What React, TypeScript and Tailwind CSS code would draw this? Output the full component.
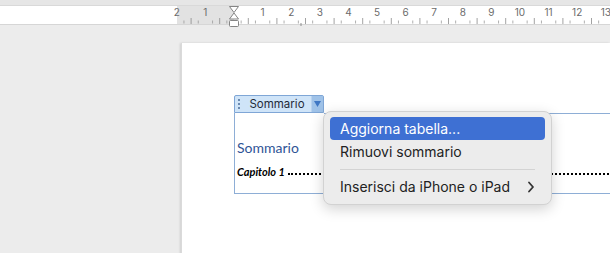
import React from "react";

function Ruler() {
  const zero = 234;
  const cm = 28.6;
  const ticks: React.ReactNode[] = [];
  const nums: React.ReactNode[] = [];
  for (let q = -8; q <= 60; q++) {
    const x = zero + (q * cm) / 4;
    if (x < 176 || x > 612) continue;
    if (q % 4 === 0) {
      const n = Math.abs(q / 4);
      if (n !== 0)
        nums.push(
          <text key={"n" + q} x={x} y={9.5} textAnchor="middle" fontSize="10" fill="#6b6b6b" fontFamily="Inter, sans-serif">
            {n}
          </text>
        );
    } else if (q % 2 === 0) {
      ticks.push(<line key={"t" + q} x1={x} x2={x} y1={12} y2={18} stroke="#8a8a8a" strokeWidth="0.8" />);
    } else {
      ticks.push(<line key={"t" + q} x1={x} x2={x} y1={14.5} y2={17.5} stroke="#9a9a9a" strokeWidth="0.8" />);
    }
  }
  return (
    <svg width="610" height="18" className="block overflow-visible">
      <rect x="0" y="0" width="610" height="18" fill="#ffffff" />
      <rect x="177" y="0" width="57" height="18" fill="#e2e2e2" />
      {ticks}
      {nums}
      <path d="M229.5 0.5 L238.5 0.5 L234 6.5 Z" fill="#fff" stroke="#777" strokeWidth="0.9" />
      <path d="M234 7 L238.5 13 L229.5 13 Z" fill="#fff" stroke="#777" strokeWidth="0.9" />
      <rect x="229.5" y="14.5" width="9" height="6" fill="#fff" stroke="#777" strokeWidth="0.9" rx="1" />
      <line x1="301" x2="301" y1="17" y2="20" stroke="#777" strokeWidth="0.8" />
    </svg>
  );
}

export default function App() {
  return (
    <div className="relative w-[610px] h-[253px] overflow-hidden bg-[#ececec] font-['Inter',sans-serif]">
      <div className="h-[6px] bg-[#e6e6e6] border-b border-[#d9d9d9]" />
      <div className="relative z-10 border-b border-[#d6d6d6]">
        <Ruler />
      </div>
      <div className="pl-[181px] pt-[18px]">
        <div className="bg-white h-[230px] shadow-[-1px_0_2px_rgba(0,0,0,0.12)] border-l border-[#dadada] pl-[52px] pt-[52px]">
          <div className="w-[420px]">
            <div className="flex h-[18px] w-[90px] border border-[#7fa6d6] rounded-t-[2px] bg-[#cfe4f8] items-stretch">
              <div className="w-[5px] flex flex-col items-center justify-center gap-[2px] ml-[1px]">
                <div className="w-[2px] h-[2px] bg-[#4a6d9a] rounded-full" />
                <div className="w-[2px] h-[2px] bg-[#4a6d9a] rounded-full" />
                <div className="w-[2px] h-[2px] bg-[#4a6d9a] rounded-full" />
              </div>
              <div className="flex-1 text-center text-[11.5px] leading-[16px] text-[#1f2a3a] pl-[2px]">Sommario</div>
              <div className="w-[12px] bg-[#9fc2e8] flex items-center justify-center border-l border-[#b9d2ee]">
                <svg width="7" height="6" viewBox="0 0 7 6">
                  <path d="M0 0 L7 0 L3.5 6 Z" fill="#3f77c4" />
                </svg>
              </div>
            </div>
            <div className="h-[81px] border border-t-0 border-[#8eaed6] relative">
              <div className="absolute left-[89px] right-0 top-0 border-t border-[#8eaed6]" />
              <div className="pl-[2px] pt-[26px] text-[14px] leading-[17px] text-[#2f5496] font-['Lato',sans-serif]">
                Sommario
              </div>
              <div className="pl-[2px] pt-[9px] flex items-end text-[11px] leading-[13px] text-black font-bold italic font-['Lato',sans-serif] whitespace-nowrap">
                <span>Capitolo 1</span>
                <div className="flex-1 ml-[3px] mb-[3px] border-b-2 border-dotted border-black" />
              </div>
            </div>
          </div>
        </div>
      </div>

      <div className="absolute left-[323px] top-[111px] w-[229px] h-[94px] rounded-[8px] bg-[#ececec] border border-[#d2d2d2] shadow-[0_4px_14px_rgba(0,0,0,0.18)] px-[6px] pt-[5px] text-[14px] text-[#222]">
        <div className="h-[23px] rounded-[4px] bg-[#3e70d3] text-white pl-[10px] leading-[23px]">Aggiorna tabella...</div>
        <div className="h-[24px] pl-[10px] leading-[24px]">Rimuovi sommario</div>
        <div className="mx-[10px] my-[5px] h-px bg-[#d3d3d3]" />
        <div className="h-[24px] pl-[10px] pr-[10px] leading-[24px] flex items-center justify-between">
          <span>Inserisci da iPhone o iPad</span>
          <svg width="8" height="12" viewBox="0 0 8 12">
            <path d="M2 1.5 L6 6 L2 10.5" fill="none" stroke="#333" strokeWidth="1.8" strokeLinecap="round" strokeLinejoin="round" />
          </svg>
        </div>
      </div>
    </div>
  );
}
